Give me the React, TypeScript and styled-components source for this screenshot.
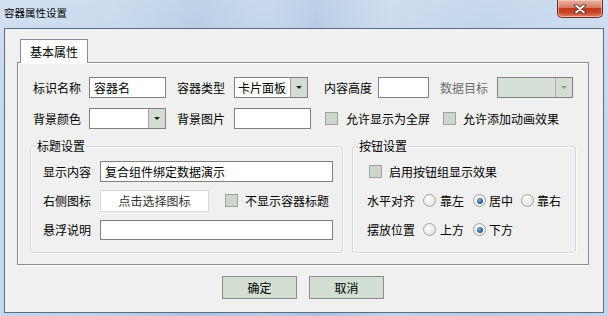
import React from "react";
import styled, { createGlobalStyle } from "styled-components";

const GlobalStyle = createGlobalStyle`
  html, body {
    margin: 0;
    padding: 0;
    background: #bcd2ea;
  }
  body {
    font-family: "Noto Sans CJK SC", "Noto Sans", sans-serif;
    font-size: 12px;
    color: #000;
  }
`;

const Window = styled.div`
  width: 608px;
  height: 316px;
  box-sizing: border-box;
  padding: 0 4px 3px 4px;
  display: flex;
  flex-direction: column;
  background: linear-gradient(
      180deg,
      rgba(255, 255, 255, 0.25) 0%,
      rgba(255, 255, 255, 0) 40%
    ),
    linear-gradient(
      90deg,
      #c3d7ee 0%,
      #bcd2ea 18%,
      #a9c3e0 32%,
      #b6cde8 44%,
      #a7c1df 52%,
      #bfd4ec 64%,
      #b3cbe6 80%,
      #c2d6ed 100%
    );
`;

const TitleBar = styled.div`
  height: 28px;
  flex: none;
  display: flex;
  justify-content: space-between;
  align-items: flex-start;
`;

const Title = styled.div`
  margin-top: 6px;
  font-size: 10.5px;
  line-height: 14px;
  letter-spacing: 0;
  color: #000;
`;

const CloseButton = styled.div`
  width: 46px;
  height: 18px;
  box-sizing: border-box;
  margin-right: 1px;
  border: 1px solid #6b2c22;
  border-top: none;
  border-radius: 0 0 5px 5px;
  background: linear-gradient(
    180deg,
    #eab2a3 0%,
    #d97a62 45%,
    #c2391d 50%,
    #c8482c 75%,
    #e0846a 100%
  );
  box-shadow: inset 0 0 0 1px rgba(255, 220, 210, 0.55);
  display: flex;
  align-items: center;
  justify-content: center;
`;

const Client = styled.div`
  flex: 1;
  box-sizing: border-box;
  border: 1px solid #5a6c80;
  background: #f0f0f0;
  padding: 10px 0 0 12px;
  display: flex;
  flex-direction: column;
`;

const TabStrip = styled.div`
  display: flex;
  padding-left: 3px;
  height: 23px;
`;

const Tab = styled.div`
  position: relative;
  z-index: 1;
  box-sizing: border-box;
  height: 24px;
  padding: 0 9px;
  border: 1px solid #898c95;
  border-bottom: none;
  background: #fcfcfc;
  display: flex;
  align-items: center;
  line-height: 16px;
`;

const Panel = styled.div`
  width: 572px;
  height: 203px;
  box-sizing: border-box;
  border: 1px solid #898c95;
  box-shadow: inset 1px 1px 0 #ffffff, 0 1px 0 #ffffff;
  background: #f0f0f0;
  padding: 14px 0 0 12px;
`;

const Row = styled.div<{ $mt?: number }>`
  display: flex;
  align-items: center;
  height: 21px;
  padding-left: 3px;
  margin-top: ${(p) => p.$mt ?? 0}px;
`;

const GroupRow = styled.div<{ $mt?: number }>`
  display: flex;
  align-items: center;
  height: 21px;
  margin-top: ${(p) => p.$mt ?? 0}px;
`;

const Label = styled.span<{ $ml?: number; $muted?: boolean }>`
  margin-left: ${(p) => p.$ml ?? 0}px;
  white-space: nowrap;
  line-height: 16px;
  color: ${(p) => (p.$muted ? "#6d6d6d" : "#000")};
`;

const TextBox = styled.div<{ $w: number; $ml?: number; $h?: number }>`
  width: ${(p) => p.$w}px;
  height: ${(p) => p.$h ?? 21}px;
  margin-left: ${(p) => p.$ml ?? 0}px;
  box-sizing: border-box;
  border: 1px solid #7f7f7f;
  background: #ffffff;
  padding: 0 4px;
  display: flex;
  align-items: center;
  line-height: 16px;
  white-space: nowrap;
  overflow: hidden;
`;

const Combo = styled.div<{ $w: number; $ml?: number; $disabled?: boolean }>`
  width: ${(p) => p.$w}px;
  height: 21px;
  margin-left: ${(p) => p.$ml ?? 0}px;
  box-sizing: border-box;
  border: 1px solid #7f7f7f;
  background: ${(p) => (p.$disabled ? "#d6e0d6" : "#ffffff")};
  display: flex;
  align-items: stretch;
`;

const ComboText = styled.div`
  flex: 1;
  padding: 0 3px;
  display: flex;
  align-items: center;
  line-height: 16px;
  white-space: nowrap;
  overflow: hidden;
`;

const ComboButton = styled.div<{ $disabled?: boolean }>`
  width: 16px;
  flex: none;
  border-left: 1px solid ${(p) => (p.$disabled ? "#a9b0a9" : "#9aa29a")};
  background: #d3ddd3;
  display: flex;
  align-items: center;
  justify-content: center;
  &::after {
    content: "";
    border-left: 3px solid transparent;
    border-right: 3px solid transparent;
    border-top: 3px solid ${(p) => (p.$disabled ? "#9a9a9a" : "#222")};
  }
`;

const Check = styled.span<{ $ml?: number }>`
  width: 13px;
  height: 13px;
  flex: none;
  box-sizing: border-box;
  margin-left: ${(p) => p.$ml ?? 0}px;
  border: 1px solid #9ba39b;
  background: #cad7ca;
`;

const Radio = styled.span<{ $ml?: number; $on?: boolean }>`
  width: 13px;
  height: 13px;
  flex: none;
  box-sizing: border-box;
  margin-left: ${(p) => p.$ml ?? 0}px;
  border-radius: 50%;
  border: 1px solid #a3a3a3;
  background: radial-gradient(circle at 40% 35%, #ffffff 0%, #e4e4e4 70%, #d0d0d0 100%);
  display: flex;
  align-items: center;
  justify-content: center;
  &::after {
    content: "";
    display: ${(p) => (p.$on ? "block" : "none")};
    width: 6px;
    height: 6px;
    border-radius: 50%;
    background: radial-gradient(circle at 40% 35%, #7fb2e0 0%, #2a66a8 55%, #0d3c70 100%);
    box-shadow: 0 0 0 1px #ffffff;
  }
`;

const PickButton = styled.div<{ $w: number; $ml?: number }>`
  width: ${(p) => p.$w}px;
  height: 22px;
  margin-left: ${(p) => p.$ml ?? 0}px;
  box-sizing: border-box;
  border: 1px solid #d9d9d9;
  background: #ffffff;
  color: #333;
  display: flex;
  align-items: center;
  justify-content: center;
  line-height: 16px;
`;

const Groups = styled.div`
  display: flex;
  gap: 9px;
  margin-top: 9px;
`;

const Group = styled.fieldset<{ $w: number; $pl: number }>`
  width: ${(p) => p.$w}px;
  height: 115px;
  box-sizing: border-box;
  margin: 0;
  padding: 7px 0 0 ${(p) => p.$pl}px;
  border: 1px solid #d2d8dd;
  border-radius: 3px;
  box-shadow: inset 1px 1px 0 #ffffff, 1px 1px 0 #ffffff;
  min-width: 0;
`;

const Legend = styled.legend<{ $offset: number }>`
  padding: 0 1px;
  margin-left: ${(p) => p.$offset}px;
  line-height: 16px;
  font-size: 12px;
`;

const Footer = styled.div`
  display: flex;
  justify-content: center;
  gap: 12px;
  margin-top: 11px;
  padding-right: 14px;
`;

const DialogButton = styled.div`
  width: 75px;
  height: 23px;
  box-sizing: border-box;
  border: 1px solid #8c8c8c;
  background: #d3dfd3;
  display: flex;
  align-items: center;
  justify-content: center;
  line-height: 16px;
`;

const CloseGlyph = () => (
  <svg width="12" height="10" viewBox="0 0 12 10">
    <path d="M2 1.5 L10 8.5 M10 1.5 L2 8.5" stroke="#4a1a12" strokeWidth="3.6" strokeLinecap="round" />
    <path d="M2 1.5 L10 8.5 M10 1.5 L2 8.5" stroke="#ffffff" strokeWidth="2" strokeLinecap="round" />
  </svg>
);

export default function App() {
  return (
    <>
      <GlobalStyle />
      <Window>
        <TitleBar>
          <Title>容器属性设置</Title>
          <CloseButton>
            <CloseGlyph />
          </CloseButton>
        </TitleBar>
        <Client>
          <TabStrip>
            <Tab>基本属性</Tab>
          </TabStrip>
          <Panel>
            <Row>
              <Label>标识名称</Label>
              <TextBox $w={77} $ml={8}>容器名</TextBox>
              <Label $ml={11}>容器类型</Label>
              <Combo $w={74} $ml={9}>
                <ComboText>卡片面板</ComboText>
                <ComboButton />
              </Combo>
              <Label $ml={16}>内容高度</Label>
              <TextBox $w={51} $ml={6} />
              <Label $ml={11} $muted>
                数据目标
              </Label>
              <Combo $w={76} $ml={9} $disabled>
                <ComboText />
                <ComboButton $disabled />
              </Combo>
            </Row>
            <Row $mt={10}>
              <Label>背景颜色</Label>
              <Combo $w={77} $ml={8}>
                <ComboText />
                <ComboButton />
              </Combo>
              <Label $ml={11}>背景图片</Label>
              <TextBox $w={77} $ml={9} />
              <Check $ml={14} />
              <Label $ml={8}>允许显示为全屏</Label>
              <Check $ml={13} />
              <Label $ml={7}>允许添加动画效果</Label>
            </Row>
            <Groups>
              <Group $w={313} $pl={12}>
                <Legend $offset={-7}>标题设置</Legend>
                <GroupRow>
                  <Label>显示内容</Label>
                  <TextBox $w={233} $ml={9}>复合组件绑定数据演示</TextBox>
                </GroupRow>
                <GroupRow $mt={8}>
                  <Label>右侧图标</Label>
                  <PickButton $w={109} $ml={9}>点击选择图标</PickButton>
                  <Check $ml={16} />
                  <Label $ml={7}>不显示容器标题</Label>
                </GroupRow>
                <GroupRow $mt={8}>
                  <Label>悬浮说明</Label>
                  <TextBox $w={233} $ml={9} $h={20} />
                </GroupRow>
              </Group>
              <Group $w={224} $pl={14}>
                <Legend $offset={-9}>按钮设置</Legend>
                <GroupRow>
                  <Check $ml={2} />
                  <Label $ml={7}>启用按钮组显示效果</Label>
                </GroupRow>
                <GroupRow $mt={8}>
                  <Label>水平对齐</Label>
                  <Radio $ml={8} />
                  <Label $ml={4}>靠左</Label>
                  <Radio $ml={9} $on />
                  <Label $ml={3}>居中</Label>
                  <Radio $ml={8} />
                  <Label $ml={3}>靠右</Label>
                </GroupRow>
                <GroupRow $mt={8}>
                  <Label>摆放位置</Label>
                  <Radio $ml={8} />
                  <Label $ml={4}>上方</Label>
                  <Radio $ml={9} $on />
                  <Label $ml={3}>下方</Label>
                </GroupRow>
              </Group>
            </Groups>
          </Panel>
          <Footer>
            <DialogButton>确定</DialogButton>
            <DialogButton>取消</DialogButton>
          </Footer>
        </Client>
      </Window>
    </>
  );
}
